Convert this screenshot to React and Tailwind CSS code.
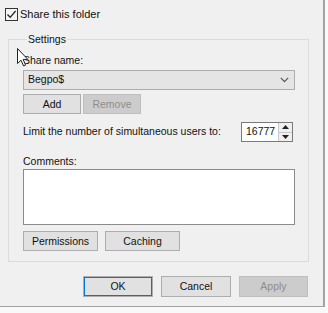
import React from "react";

const Btn = ({ children, className = "", disabled = false }) => (
  <button
    type="button"
    className={`flex h-[20px] items-center justify-center border text-[10.5px] leading-none ${
      disabled
        ? "border-[#bfbfbf] bg-[#cccccc] text-[#8d8d8d]"
        : "border-[#adadad] bg-[#e1e1e1] text-[#111]"
    } ${className}`}
  >
    {children}
  </button>
);

const Cursor = () => (
  <svg
    className="absolute left-[17px] top-[48px]"
    width="12"
    height="19"
    viewBox="0 0 12 19"
  >
    <path
      d="M0.5 0.5 L0.5 15.5 L4 12.2 L6.6 18 L8.6 17.1 L6.1 11.4 L10.8 11.4 Z"
      fill="#fff"
      stroke="#222"
      strokeWidth="1"
      strokeLinejoin="round"
    />
  </svg>
);

export default function App() {
  return (
    <div className="relative flex h-[313px] w-[328px] items-start bg-[#f9f9f9] font-['Liberation_Sans',Arial,sans-serif] text-[10.5px] text-[#111]">
      <div className="flex h-[307px] w-[325px] flex-col border-r-2 border-b border-[#a3a3a3] bg-[#f0f0f0]">
        {/* share checkbox */}
        <label className="ml-[5px] mt-[8px] flex h-[13px] items-center gap-[2px]">
          <span className="flex h-[13px] w-[13px] items-center justify-center border border-[#333] bg-[#f4f4f4]">
            <svg width="11" height="11" viewBox="0 0 11 11">
              <path d="M1.5 5.5 L4.2 8.3 L9.6 2" fill="none" stroke="#222" strokeWidth="1.3" />
            </svg>
          </span>
          <span className="text-[11px]">Share this folder</span>
        </label>

        {/* settings group */}
        <fieldset className="ml-[8px] mt-[12px] h-[229px] w-[301px] border border-[#dcdcdc] pl-[14px] pr-[13px]">
          <legend className="ml-[4px] px-[1px] leading-[13px]">Settings</legend>

          <div className="mt-[8px] leading-[13px]">Share name:</div>
          <div className="mt-[3px] flex h-[20px] items-center justify-between border border-[#adadad] bg-[#e5e5e5] pl-[4px] pr-[5px]">
            <span>Begpo$</span>
            <svg width="9" height="6" viewBox="0 0 9 6">
              <path d="M0.8 0.8 L4.5 4.6 L8.2 0.8" fill="none" stroke="#555" strokeWidth="1.2" />
            </svg>
          </div>

          <div className="mt-[4px] flex gap-[2px]">
            <Btn className="w-[58px]">Add</Btn>
            <Btn className="w-[58px]" disabled>
              Remove
            </Btn>
          </div>

          <div className="mt-[8px] flex items-center justify-between">
            <span>Limit the number of simultaneous users to:</span>
            <div className="mr-[2px] flex h-[20px] w-[52px] items-center border border-[#7a7a7a] bg-white">
              <span className="flex-1 pl-[4px]">16777</span>
              <div className="flex h-full w-[14px] flex-col border-l border-[#c8c8c8] bg-[#f0f0f0]">
                <div className="flex flex-1 items-center justify-center">
                  <svg width="7" height="4" viewBox="0 0 7 4">
                    <path d="M0 4 L3.5 0 L7 4 Z" fill="#222" />
                  </svg>
                </div>
                <div className="h-px bg-[#c8c8c8]" />
                <div className="flex flex-1 items-center justify-center">
                  <svg width="7" height="4" viewBox="0 0 7 4">
                    <path d="M0 0 L3.5 4 L7 0 Z" fill="#222" />
                  </svg>
                </div>
              </div>
            </div>
          </div>

          <div className="mt-[13px] leading-[13px]">Comments:</div>
          <div className="mt-px h-[56px] border border-[#8c8c8c] bg-white" />

          <div className="mt-[6px] flex gap-[7px]">
            <Btn className="w-[75px]">Permissions</Btn>
            <Btn className="w-[75px]">Caching</Btn>
          </div>
        </fieldset>

        {/* dialog buttons */}
        <div className="mt-[14px] flex justify-end gap-[8px] pr-[15px]">
          <Btn className="h-[21px] w-[70px] border-[#0078d7] outline outline-1 -outline-offset-2 outline-[#0078d7]">OK</Btn>
          <Btn className="h-[21px] w-[70px]">Cancel</Btn>
          <Btn className="h-[21px] w-[69px]" disabled>
            Apply
          </Btn>
        </div>
      </div>
      <Cursor />
    </div>
  );
}
